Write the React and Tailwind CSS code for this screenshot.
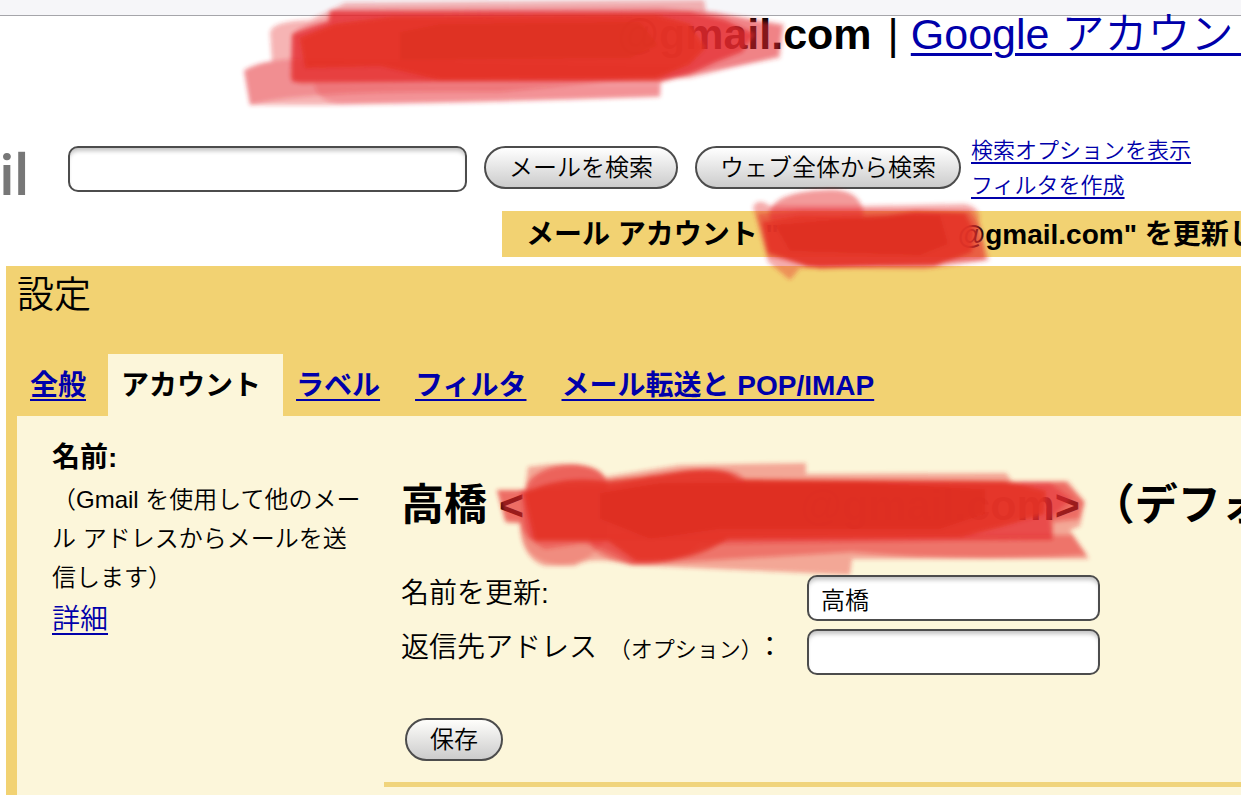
import React from 'react';

const tabs = [
  { label: '全般' },
  { label: 'アカウント', active: true },
  { label: 'ラベル' },
  { label: 'フィルタ' },
  { label: 'メール転送と POP/IMAP' },
];

function PillButton({ children }) {
  return (
    <button
      type="button"
      className="h-[43px] shrink-0 rounded-full border-2 border-[#4c4c4c] bg-linear-to-b from-white/90 to-[#cccccc] px-[23px] text-2xl leading-none font-[350]"
    >
      {children}
    </button>
  );
}

function TextBox({ className, ...props }) {
  return (
    <input
      type="text"
      className={`h-[46px] shrink-0 rounded-[10px] border-2 border-[#4c4c4c] bg-white px-3 text-2xl font-[350] shadow-[inset_0_5px_4px_-2px_#c4c4c4] ${className}`}
      {...props}
    />
  );
}

/* Red marker over a private address */
function Marker({ className, viewBox, id, children }) {
  return (
    <svg className={`pointer-events-none absolute ${className}`} viewBox={viewBox} aria-hidden="true">
      <defs>
        <filter id={id} x="-5%" y="-10%" width="110%" height="120%">
          <feGaussianBlur stdDeviation="2" />
        </filter>
      </defs>
      <g filter={`url(#${id})`}>{children}</g>
    </svg>
  );
}

function AccountMarker() {
  return (
    <Marker id="m1" className="left-[230px] -top-4 h-[120px] w-[570px]" viewBox="230 0 570 120">
      <g fill="#e62c2e">
        <path opacity=".35" d="M270 32Q272 21 310 20L345 3L704 0L706 12Q740 16 784 24L780 58L690 75L661 82L660 97L330 105L250 105L244 71Q258 62 288 59L272 62Z" />
        <path opacity=".28" d="M244 70Q260 60 295 59L690 66L660 77L500 92Q300 90 250 105Z" />
        <path opacity=".25" d="M314 84H660V96Q520 103 345 104Q318 104 314 84Z" />
        <path opacity=".35" d="M292 35Q300 24 330 20L330 10L660 8L715 12L750 20L782 26L778 56L730 68L690 78L300 84L290 78Z" />
        <path opacity=".7" d="M292 34L328 22L330 11L690 12L725 20L755 34L742 52L716 62L690 74L660 82H292Z" />
      </g>
      <path fill="#e43428" opacity=".88" d="M300 38L335 24L390 17L655 15L690 24L705 48L690 64L655 79L440 80L380 66L305 68Z" />
      <path fill="#dd2f21" opacity=".8" d="M400 32L440 24L640 22L658 45L630 58L400 60Z" />
    </Marker>
  );
}

function BannerMarker() {
  return (
    <Marker id="m2" className="left-[238px] -top-[31px] h-[110px] w-[270px]" viewBox="740 180 270 110">
      <g fill="#e62c2e">
        <path opacity=".48" d="M769 214Q772 192 825 190Q858 188 863 210V220H771Z" />
        <path opacity=".4" d="M753 207Q758 197 770 206L862 206L965 204Q982 208 979 221L989 260L925 269L800 268L790 280L768 262Z" />
        <path opacity=".5" d="M757 214L800 210L970 211L979 225L985 260L820 269L768 256Z" />
      </g>
      <path fill="#e43428" opacity=".88" d="M762 222L800 216L880 217L915 211L965 213L974 230L972 252L935 266L808 267L768 252Z" />
      <path fill="#dd2f21" opacity=".8" d="M775 225L880 216L940 216L948 244L920 255L790 251Z" />
    </Marker>
  );
}

function NameMarker() {
  return (
    <Marker id="m3" className="left-[96px] -top-[34px] h-[140px] w-[620px]" viewBox="480 450 620 140">
      <g fill="#e62c2e">
        <path opacity=".4" d="M528 468Q590 458 604 478L680 466L806 464V475L1006 474L1012 482L1068 482L1085 503L1080 527L1070 531L1089 560L852 560L850 576L740 571L632 566Q590 556 575 567H545Q521 560 520 524H506L497 491H525Z" />
        <path opacity=".45" d="M497 491L525 491Q530 468 575 466Q610 468 607 490L650 476Q745 460 746 486L1065 483L1084 503L1079 520L1053 523V541L700 545Q680 567 632 566Q600 545 580 545L545 550Q524 540 520 524L505 522Z" />
        <path opacity=".4" d="M590 536H1072L1087 556Q960 563 852 553L632 566Q585 556 590 536Z" />
        <path opacity=".2" d="M524 500Q530 466 572 464Q604 466 607 484V538Q590 566 560 566Q523 562 520 530Z" />
        <path opacity=".5" d="M520 491L700 482L1050 484L1072 500L1050 520L1052 540H530Z" />
      </g>
      <path fill="#e43428" opacity=".88" d="M524 494Q560 476 605 482L660 476Q720 464 738 480L1005 482L1046 492L1044 515L1000 528L960 538L728 540Q690 565 636 562L608 542H535Z" />
      <path fill="#dd2f21" opacity=".75" d="M600 494L660 484H860L985 490V515L940 530L720 530L650 540L600 520Z" />
    </Marker>
  );
}

export default function App() {
  return (
    <div className="min-h-screen overflow-hidden bg-white text-[28px] font-[350] text-black [font-family:'Liberation_Sans','Noto_Sans_CJK_JP',sans-serif]">
      <div className="h-4 border-b border-[#a5a5aa] bg-[#f6f6f9]" />

      {/* ACCOUNT BAR */}
      <div className="relative flex gap-3 pl-[617px] text-[43px] leading-9 whitespace-nowrap">
        <b className="mr-1 font-bold">@gmail.com</b>
        <span>|</span>
        <a href="#account" className="text-[#0000aa] underline decoration-[3px] underline-offset-4">
          Google アカウント
        </a>
        <AccountMarker />
      </div>

      {/* SEARCH */}
      <header className="mt-[81px] flex items-start whitespace-nowrap">
        <div className="mt-2 flex h-16 w-[29px] shrink-0 justify-end overflow-hidden font-[Roboto] text-[58px] leading-[68px] font-medium text-[#777777]">
          Gmail
        </div>
        <div className="mt-[13px] ml-[39px] flex gap-[17px]">
          <TextBox aria-label="メールを検索" className="w-[399px]" />
          <PillButton>メールを検索</PillButton>
          <PillButton>ウェブ全体から検索</PillButton>
        </div>
        <nav className="ml-[10px] flex h-[70px] flex-col text-[22px] leading-[35px] text-[#0000aa]">
          <a href="#options" className="underline underline-offset-4">検索オプションを表示</a>
          <a href="#filter" className="underline underline-offset-4">フィルタを作成</a>
        </nav>
      </header>

      {/* NOTICE */}
      <div className="relative mt-[6px] ml-[502px] h-[46px] bg-[#f2d272] pl-6 leading-[48px] font-bold whitespace-nowrap">
        メール アカウント "<span className="inline-block w-[179px]" />@gmail.com" を更新しました。
        <BannerMarker />
      </div>

      {/* SETTINGS */}
      <main className="mt-[9px] ml-[6px] border-l-[11px] border-[#f2d272] bg-[#fcf6da]">
        <div className="bg-[#f2d272]">
          <h1 className="h-[88px] text-[37px] leading-[60px] font-[350]">設定</h1>
          <nav className="flex h-[62px] leading-[64px] font-bold whitespace-nowrap">
            {tabs.map((tab) => (
              <a
                key={tab.label}
                href="#tab"
                className={tab.active
                  ? 'bg-[#fcf6da] pr-[22px] pl-[13px]'
                  : 'pr-[22px] pl-[13px] text-[#0000aa] underline decoration-2 underline-offset-4'}
              >
                {tab.label}
              </a>
            ))}
          </nav>
        </div>

        <div className="flex">
          <section className="w-[367px] shrink-0 pt-5 pl-[35px]">
            <h2 className="leading-[44px] font-bold">名前:</h2>
            <p className="text-2xl leading-[39px] whitespace-nowrap">
              （Gmail を使用して他のメー<br />
              ル アドレスからメールを送<br />
              信します）
            </p>
            <a href="#details" className="leading-[46px] text-[#0000aa] underline decoration-2 underline-offset-4">詳細</a>
          </section>

          <form className="min-w-0 grow pb-4">
            <div className="border-b-[5px] border-[#f0d47c] pt-[67px] pb-[21px] pl-[17px]">
              <div className="relative -ml-[113px] pl-[113px] text-[43px] leading-[44px] font-bold whitespace-nowrap">
                高橋 &lt;<span className="inline-block w-[276px]" />@gmail.com&gt; （デフォルト）
                <div className="absolute top-0 left-[96px]">
                  <NameMarker />
                </div>
              </div>
              <div className="relative mt-12 grid grid-cols-[406px_293px] gap-y-2 leading-[38px] whitespace-nowrap">
                <label htmlFor="name">名前を更新:</label>
                <TextBox id="name" defaultValue="高橋" className="w-full" />
                <label htmlFor="reply">
                  返信先アドレス <span className="mx-1 text-[22px]">（オプション）</span>：
                </label>
                <TextBox id="reply" className="w-full" />
              </div>
              <div className="mt-[43px] ml-1 flex">
                <PillButton>保存</PillButton>
              </div>
            </div>
          </form>
        </div>
      </main>
    </div>
  );
}
